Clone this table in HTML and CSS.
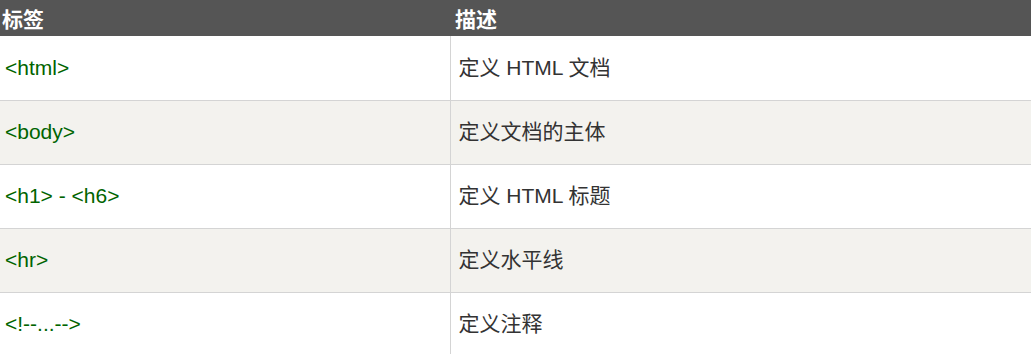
FILE: index.html
```html
<!DOCTYPE html>
<html lang="zh-CN">
<head>
<meta charset="utf-8">
<title>HTML 基本标签</title>
<link rel="stylesheet" href="styles.css">
</head>
<body>
<table class="ref-table">
  <thead>
    <tr class="head-row">
      <th class="col-tag">标签</th>
      <th class="col-desc">描述</th>
    </tr>
  </thead>
  <tbody>
    <tr class="row"><td class="tag">&lt;html&gt;</td><td class="desc">定义 HTML 文档</td></tr>
    <tr class="row alt"><td class="tag">&lt;body&gt;</td><td class="desc">定义文档的主体</td></tr>
    <tr class="row"><td class="tag">&lt;h1&gt; - &lt;h6&gt;</td><td class="desc">定义 HTML 标题</td></tr>
    <tr class="row alt"><td class="tag">&lt;hr&gt;</td><td class="desc">定义水平线</td></tr>
    <tr class="row"><td class="tag">&lt;!--...--&gt;</td><td class="desc">定义注释</td></tr>
  </tbody>
</table>
</body>
</html>
```
FILE: styles.css
```css
html, body {
  margin: 0;
  padding: 0;
  background: #ffffff;
  overflow: hidden;
}

body {
  font-family: "Liberation Sans", Arial, "Noto Sans CJK SC", sans-serif;
  font-size: 21px;
}

.ref-table {
  border-collapse: collapse;
  border-spacing: 0;
  margin-left: -3px;
  width: 1040px;
  table-layout: fixed;
}

.col-tag {
  width: 453px;
}

.head-row {
  background: #555555;
  height: 36px;
}

.head-row th {
  color: #ffffff;
  font-weight: bold;
  text-align: left;
  padding: 0 5px;
  line-height: 36px;
  height: 36px;
  box-sizing: border-box;
  font-family: "Noto Sans CJK SC", sans-serif;
  font-size: 21px;
}

.row td {
  height: 64px;
  box-sizing: border-box;
  padding: 0 8px;
  vertical-align: middle;
  border-bottom: 1px solid #d4d4d4;
  line-height: 1.2;
}

.row.alt td {
  background: #f3f2ee;
}

.tag {
  color: #006400;
  border-right: 1px solid #d4d4d4;
}

.desc {
  color: #333333;
}
```
